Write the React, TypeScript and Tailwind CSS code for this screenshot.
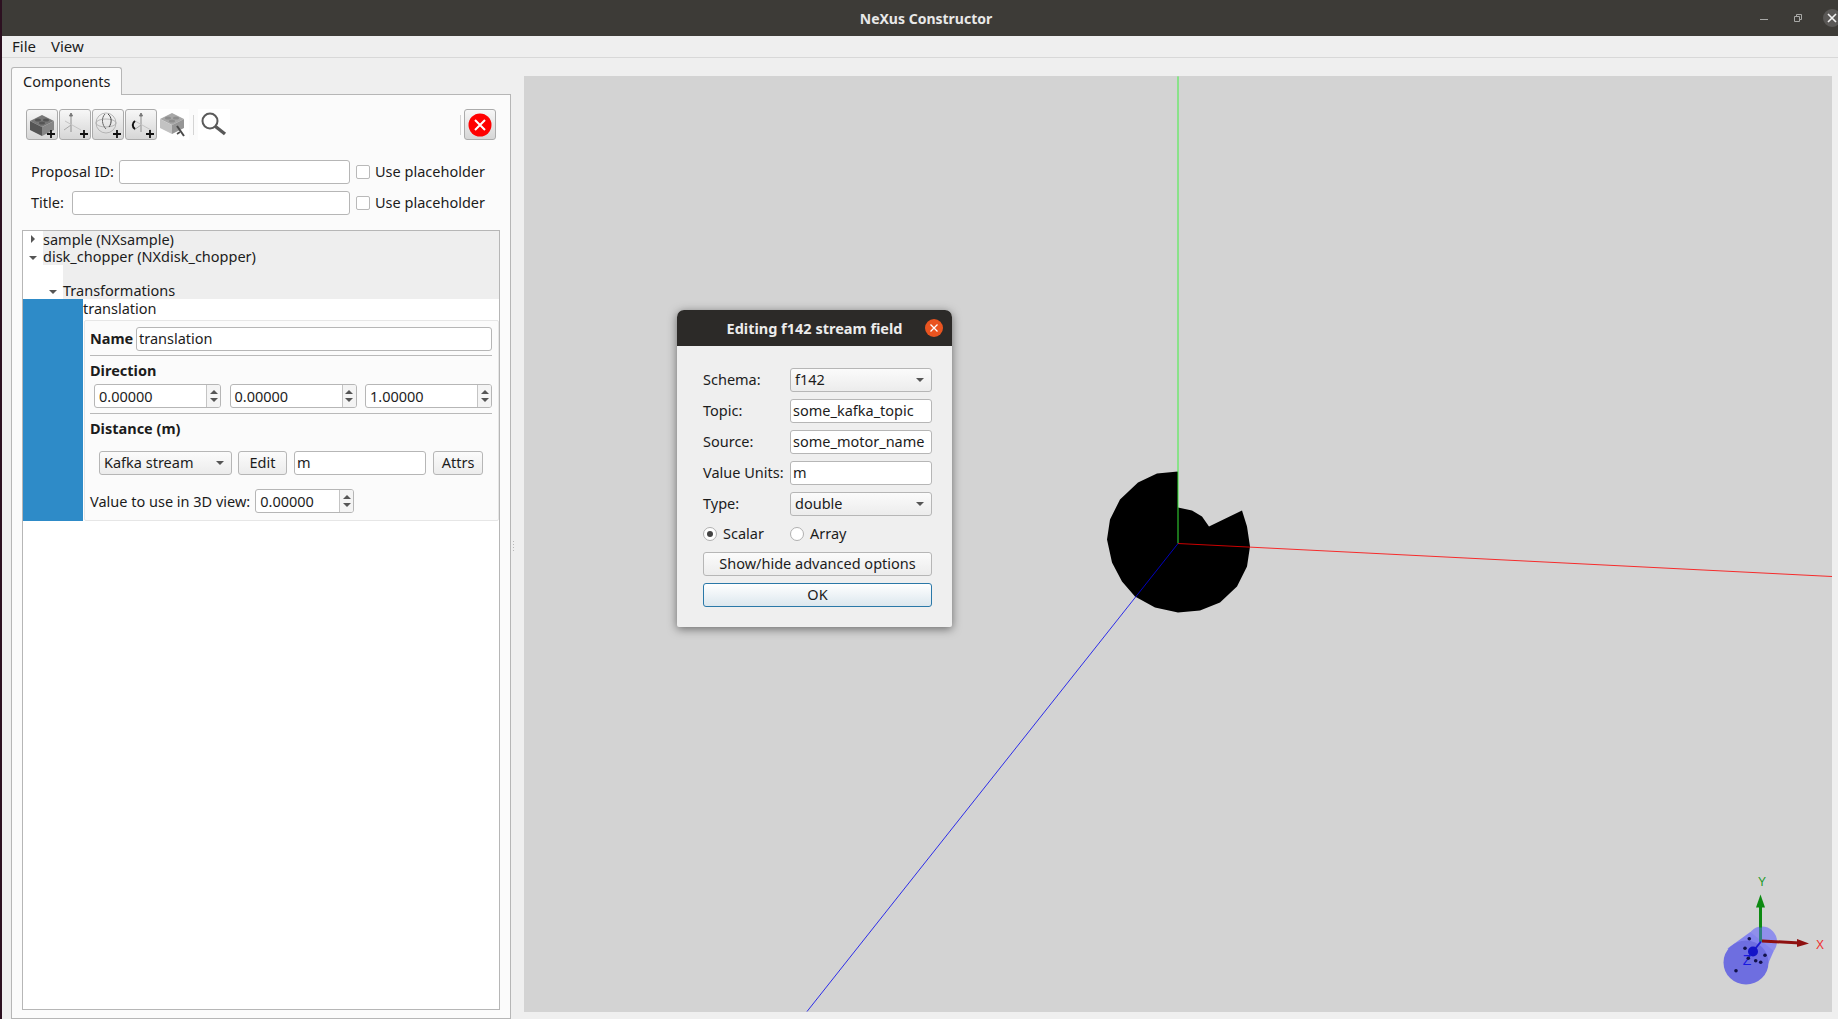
import React from 'react';

const inputCls = 'flex items-center bg-white border border-[#b6b6b6] rounded-[3px] h-[24px] px-[2px] text-[#1c1c1c] overflow-hidden whitespace-nowrap';
const buttonCls = 'flex items-center justify-center border border-[#b6b6b6] rounded-[3px] h-[24px] bg-gradient-to-b from-[#fbfbfb] to-[#ececec] text-[#1c1c1c] whitespace-nowrap';

const Caret = ({ dir = 'down' }: { dir?: 'down' | 'up' | 'right' }) => {
  const pts = dir === 'down' ? '0,0 8,0 4,4' : dir === 'up' ? '0,4 8,4 4,0' : '0,0 4,4 0,8';
  const w = dir === 'right' ? 4 : 8;
  const h = dir === 'right' ? 8 : 4;
  return (
    <svg width={w} height={h} viewBox={`0 0 ${w} ${h}`} className="shrink-0">
      <polygon points={pts} fill="#555" />
    </svg>
  );
};

const Spin = ({ value, w }: { value: string; w: string }) => (
  <div className={`flex bg-white border border-[#b6b6b6] rounded-[3px] h-[24px] overflow-hidden ${w}`}>
    <div className="flex-1 flex items-center pl-[4px] pt-[1px] text-[#1c1c1c]">{value}</div>
    <div className="w-[14px] border-l border-[#c4c4c4] bg-[#f4f4f4] flex flex-col items-center justify-center gap-[4px]">
      <Caret dir="up" />
      <Caret dir="down" />
    </div>
  </div>
);

const Combo = ({ value, className }: { value: string; className: string }) => (
  <div className={`flex items-center justify-between pl-[4px] pr-[7px] border border-[#b6b6b6] rounded-[3px] h-[24px] bg-gradient-to-b from-[#fbfbfb] to-[#ececec] text-[#1c1c1c] ${className}`}>
    <span>{value}</span>
    <Caret />
  </div>
);

const Check = () => <div className="w-[14px] h-[14px] bg-white border border-[#b9b9b9] rounded-[2px] shrink-0" />;

const Brick = ({ wrench }: { wrench?: boolean }) => (
  <>
    <polygon points="3,11 15,5 27,11 15,17" fill={wrench ? '#a8a8a8' : '#777'} />
    <polygon points="3,11 15,17 15,26 3,20" fill={wrench ? '#c2c2c2' : '#555'} />
    <polygon points="15,17 27,11 27,20 15,26" fill={wrench ? '#969696' : '#868686'} />
    <ellipse cx="11" cy="10" rx="3" ry="1.6" fill={wrench ? '#8e8e8e' : '#555'} />
    <ellipse cx="19" cy="10" rx="3" ry="1.6" fill={wrench ? '#8e8e8e' : '#555'} />
    <ellipse cx="15" cy="13" rx="3" ry="1.6" fill={wrench ? '#8e8e8e' : '#555'} />
  </>
);

const Plus = () => <path d="M24 20v8M20 24h8" stroke="#111" strokeWidth="1.8" />;

const Axes = () => (
  <g fill="none">
    <path d="M11 4v18" stroke="#8e8e8e" />
    <path d="M11 15l-7 5" stroke="#a8a8a8" />
    <path d="M5 11l16 9" stroke="#c4c4c4" />
    <path d="M11 3l-1.5 3h3z" fill="#777" stroke="#777" />
  </g>
);

const ToolBtn = ({ children }: { children: React.ReactNode }) => (
  <div className="w-[32px] h-[31px] border border-[#ababab] rounded-[3px] bg-gradient-to-b from-[#f7f7f7] to-[#d6d6d6] flex items-center justify-center">
    <svg width="30" height="29" viewBox="0 0 30 29">{children}</svg>
  </div>
);

const Toolbar = () => (
  <div className="flex items-center h-[31px] pl-[4px] pr-[4px]">
    <div className="flex gap-[1px]">
      <ToolBtn>
        <Brick />
        <Plus />
      </ToolBtn>
      <ToolBtn>
        <Axes />
        <Plus />
      </ToolBtn>
      <ToolBtn>
        <g stroke="#a8a8a8" strokeWidth="0.8" fill="none">
          <circle cx="13" cy="13" r="10" />
          <ellipse cx="13" cy="13" rx="10" ry="4" />
        </g>
        <path d="M15 4c4 3 4 9 1 13" stroke="#444" strokeWidth="1" fill="none" />
        <path d="M12 4c-4 4-3 11 1 15" stroke="#666" strokeWidth="1" fill="none" />
        <Plus />
      </ToolBtn>
      <ToolBtn>
        <g transform="translate(4 0)">
          <Axes />
        </g>
        <path d="M9 11c-3 2-3 6 0 8" stroke="#111" strokeWidth="2" fill="none" />
        <Plus />
      </ToolBtn>
    </div>
    <div className="w-[32px] h-[31px] bg-white flex items-center justify-center">
      <svg width="30" height="29" viewBox="0 0 30 29">
        <g transform="translate(-1 -2)">
          <Brick wrench />
        </g>
        <path d="M19 16l7 10" stroke="#4a4a4a" strokeWidth="2" />
        <path d="M22 22l-3 2" stroke="#4a4a4a" strokeWidth="1.6" />
      </svg>
    </div>
    <div className="w-[1px] h-[20px] bg-[#d4d4d4] mx-[4px]" />
    <div className="w-[32px] h-[31px] bg-white flex items-center justify-center">
      <svg width="30" height="30" viewBox="0 0 30 30">
        <circle cx="11" cy="11" r="7.5" fill="none" stroke="#5a5a5a" strokeWidth="2" />
        <path d="M16.5 16.5l9.5 7.5" stroke="#5a5a5a" strokeWidth="3.4" />
      </svg>
    </div>
    <div className="flex-1" />
    <div className="w-[1px] h-[20px] bg-[#d4d4d4] mr-[3px]" />
    <div className="w-[32px] h-[31px] border border-[#ababab] rounded-[3px] bg-gradient-to-b from-[#f7f7f7] to-[#d6d6d6] flex items-center justify-center">
      <svg width="24" height="24" viewBox="0 0 24 24">
        <circle cx="12" cy="12" r="11.5" fill="#ff0000" />
        <path d="M7 7l10 10M17 7L7 17" stroke="#fff" strokeWidth="2" />
      </svg>
    </div>
  </div>
);

const TreeRow = ({ indent, open, h, children }: { indent: string; open: boolean; h: string; children: string }) => (
  <div className={`flex ${h}`}>
    <div className={`${indent} shrink-0 flex items-end justify-end pb-[5px] bg-white ${open ? 'pr-[6px]' : 'pr-[8px]'}`}>
      <Caret dir={open ? 'down' : 'right'} />
    </div>
    <div className="flex-1 bg-[#eeeeee] flex items-end leading-[17px] text-[#1c1c1c]">{children}</div>
  </div>
);

const ComponentTree = () => (
  <div className="mt-[15px] w-[478px] h-[780px] border border-[#b6b6b6] bg-white text-[#1c1c1c]">
    <TreeRow indent="w-[20px]" open={false} h="h-[17px]">sample (NXsample)</TreeRow>
    <TreeRow indent="w-[20px]" open h="h-[17px]">disk_chopper (NXdisk_chopper)</TreeRow>
    <TreeRow indent="w-[40px]" open h="h-[34px]">Transformations</TreeRow>
    <div className="flex h-[222px]">
      <div className="w-[60px] bg-[#2e8bc8] shrink-0" />
      <div className="flex-1 flex flex-col">
        <div className="h-[21px] flex items-center pb-[2px]">translation</div>
        <div className="flex-1 ml-[1px] bg-[#fbfbfb] border border-[#e6e6e6] rounded-[2px] pl-[5px] pr-[6px] flex flex-col">
          <div className="flex items-center mt-[6px] gap-[3px]">
            <span className="font-bold w-[43px]">Name</span>
            <div className={`${inputCls} flex-1`}>translation</div>
          </div>
          <div className="h-[1px] bg-[#b9b9b9] mt-[4px]" />
          <div className="font-bold h-[28px] pt-[2px] flex items-center">Direction</div>
          <div className="flex pl-[4px] justify-between">
            <Spin value="0.00000" w="w-[127px]" />
            <Spin value="0.00000" w="w-[127px]" />
            <Spin value="1.00000" w="w-[127px]" />
          </div>
          <div className="h-[1px] bg-[#b9b9b9] mt-[5px]" />
          <div className="font-bold h-[30px] flex items-center">Distance (m)</div>
          <div className="flex pl-[9px] gap-[7px] mt-[7px]">
            <Combo value="Kafka stream" className="w-[133px]" />
            <div className={`${buttonCls} w-[49px] -ml-[1px]`}>Edit</div>
            <div className={`${inputCls} w-[132px]`}>m</div>
            <div className={`${buttonCls} w-[50px]`}>Attrs</div>
          </div>
          <div className="flex items-center mt-[14px] gap-[5px]">
            <span className="pt-[1px]">Value to use in 3D view:</span>
            <Spin value="0.00000" w="w-[99px]" />
          </div>
        </div>
      </div>
    </div>
  </div>
);

const LeftPanel = () => (
  <div className="w-[522px] shrink-0 pl-[9px] pr-[13px] pt-[9px] flex flex-col min-h-0">
    <div className="flex">
      <div className="h-[28px] w-[111px] px-[11px] bg-[#fbfbfb] border border-[#b6b6b6] border-b-0 rounded-t-[3px] flex items-center text-[#1c1c1c] -mb-[1px] z-10">
        Components
      </div>
    </div>
    <div className="flex-1 bg-[#fbfbfb] border border-[#b6b6b6] pl-[10px] pt-[14px]">
      <div className="w-[478px]">
        <Toolbar />
      </div>
      <div className="flex items-center mt-[20px] pl-[9px] h-[24px] text-[#1c1c1c]">
        <span className="w-[88px]">Proposal ID:</span>
        <div className={`${inputCls} w-[231px]`} />
        <div className="ml-[6px]"><Check /></div>
        <span className="ml-[5px]">Use placeholder</span>
      </div>
      <div className="flex items-center mt-[7px] pl-[9px] h-[24px] text-[#1c1c1c]">
        <span className="w-[41px]">Title:</span>
        <div className={`${inputCls} w-[278px]`} />
        <div className="ml-[6px]"><Check /></div>
        <span className="ml-[5px]">Use placeholder</span>
      </div>
      <ComponentTree />
    </div>
  </div>
);

const Scene = () => (
  <svg viewBox="524 77 1308 935" className="w-full h-full block">
    <path
      d="M1178 472 L1157 474 L1138 483 L1120 500 L1110 520 L1107 540 L1112 563 L1122 582 L1135 597 L1155 608 L1178 613 L1200 611 L1220 603 L1237 587 L1247 567 L1250 547 L1247 527 L1242 511 L1209 527 L1202 517 L1192 511 L1178 508 Z"
      fill="#000"
    />
    <line x1="1178" y1="77" x2="1178" y2="544" stroke="#37e337" strokeWidth="1" />
    <line x1="1178" y1="77" x2="1178" y2="472" stroke="#8fe88f" strokeWidth="1" />
    <line x1="1178" y1="544" x2="1832" y2="577" stroke="#f00" strokeWidth="0.8" />
    <line x1="1178" y1="544" x2="807" y2="1012" stroke="#0000ee" strokeWidth="0.8" />
    {/* axis gizmo */}
    <text x="1762" y="886" textAnchor="middle" fontFamily="Liberation Sans" fontSize="12" fill="#1e9a28">Y</text>
    <text x="1820" y="949" textAnchor="middle" fontFamily="Liberation Sans" fontSize="12" fill="#f03030">X</text>
    <circle cx="1762" cy="942" r="15" fill="#8f8fec" />
    <polygon points="1727.5,949 1750.3,932.5 1773.7,951.5 1762.5,977" fill="#8484ee" />
    <ellipse cx="1746" cy="963" rx="22.5" ry="22" fill="#6e6ee0" />
    <path d="M1759 942V904h3v38z" fill="#0d8a12" />
    <polygon points="1760.5,895 1756,908 1765,908" fill="#0d8a12" />
    <path d="M1759 928h3v14h-3z" fill="#2f7f80" />
    <path d="M1762 940l38 2v3l-38-2z" fill="#8e1010" />
    <polygon points="1809,944 1797,939.5 1797,947.5" fill="#8e1010" />
    <path d="M1761 942l-8 10" stroke="#1a1ad0" strokeWidth="2" />
    <circle cx="1753" cy="952" r="5" fill="#1414c8" />
    <text x="1747" y="965" textAnchor="middle" fontFamily="Liberation Sans" fontSize="14" fill="#1a1ae0">Z</text>
    {[[1745,948.7],[1749.3,939.3],[1748.3,958.7],[1755.7,961.3],[1760.7,962.7],[1765,955.7],[1736,971.3]].map(([cx, cy]) => (
      <circle key={`${cx}-${cy}`} cx={cx} cy={cy} r="1.8" fill="#12124a" />
    ))}
  </svg>
);

const Dialog = () => {
  const rows: [string, React.ReactNode][] = [
    ['Schema:', <Combo value="f142" className="flex-1" />],
    ['Topic:', <div className={`${inputCls} flex-1`}>some_kafka_topic</div>],
    ['Source:', <div className={`${inputCls} flex-1`}>some_motor_name</div>],
    ['Value Units:', <div className={`${inputCls} flex-1`}>m</div>],
    ['Type:', <Combo value="double" className="flex-1" />],
  ];
  return (
    <div className="absolute left-[675px] top-[310px] w-[275px] h-[317px] bg-[#efefef] rounded-t-[7px] rounded-b-[2px] shadow-[0_2px_10px_rgba(0,0,0,0.5)] overflow-hidden text-[#1c1c1c]">
      <div className="h-[36px] bg-[#2c2a28] flex items-center justify-center relative pt-[1px]">
        <span className="font-bold text-[#ececec]">Editing f142 stream field</span>
        <div className="absolute right-[9px] top-[9px] w-[18px] h-[18px] rounded-full bg-[#e95420] flex items-center justify-center">
          <svg width="10" height="10" viewBox="0 0 10 10">
            <path d="M1.5 1.5l7 7M8.5 1.5l-7 7" stroke="#fff" strokeWidth="1.3" />
          </svg>
        </div>
      </div>
      <div className="pt-[22px] pl-[26px] pr-[20px] flex flex-col gap-[7px]">
        {rows.map(([label, control]) => (
          <div key={label} className="flex items-center">
            <span className="w-[87px]">{label}</span>
            {control}
          </div>
        ))}
        <div className="flex items-center h-[22px]">
          <div className="w-[14px] h-[14px] rounded-full bg-white border border-[#b0b0b0] flex items-center justify-center">
            <div className="w-[6px] h-[6px] rounded-full bg-[#444]" />
          </div>
          <span className="ml-[6px] w-[67px]">Scalar</span>
          <div className="w-[14px] h-[14px] rounded-full bg-white border border-[#b0b0b0]" />
          <span className="ml-[6px]">Array</span>
        </div>
        <div className={buttonCls}>Show/hide advanced options</div>
        <div className="flex items-center justify-center border border-[#2a78a8] rounded-[3px] h-[24px] bg-gradient-to-b from-[#ffffff] to-[#dce7ee]">OK</div>
      </div>
    </div>
  );
};

export default function App() {
  return (
    <div className="relative w-[1838px] h-[1019px] overflow-hidden bg-[#efefef] border-l-2 border-[#2c1020] flex flex-col text-[14.5px] font-['Noto_Sans',sans-serif]">
      {/* window title */}
      <div className="h-[36px] shrink-0 bg-[#3d3b37] flex items-center relative">
        <span className="flex-1 text-center font-bold text-[#e8e8e8] text-[14px] pl-[12px]">NeXus Constructor</span>
        <div className="absolute right-0 top-0 h-[36px] flex items-center">
          <div className="w-[8px] h-[1px] bg-[#a8a8a6] mt-[3px]" />
          <svg width="8" height="8" viewBox="0 0 8 8" className="ml-[26px]">
            <path d="M0.5 2.5h5v5h-5z M2.5 2V0.5h5v5H6" fill="none" stroke="#a8a8a6" />
          </svg>
          <div className="w-[18px] h-[18px] rounded-full bg-[#5a5856] ml-[21px] -mr-[3px] flex items-center justify-center">
            <svg width="10" height="10" viewBox="0 0 10 10">
              <path d="M1 1l8 8M9 1l-8 8" stroke="#f2f2f2" strokeWidth="1.6" />
            </svg>
          </div>
        </div>
      </div>
      {/* menu bar */}
      <div className="h-[22px] shrink-0 border-b border-[#d8d8d8] flex items-center gap-[15px] pl-[10px] text-[#1c1c1c] text-[15px]">
        <span>File</span>
        <span>View</span>
      </div>
      <div className="flex-1 flex min-h-0">
        <LeftPanel />
        <div className="w-[1px] flex flex-col justify-center items-center gap-[2px] -ml-[11px] mr-[10px] mt-[14px]">
          <div className="w-[1px] h-[1px] bg-[#b8b8b8]" />
          <div className="w-[1px] h-[1px] bg-[#b8b8b8]" />
          <div className="w-[1px] h-[1px] bg-[#b8b8b8]" />
          <div className="w-[1px] h-[1px] bg-[#b8b8b8]" />
        </div>
        <div className="flex-1 pt-[18px] pr-[6px] pb-[7px]">
          <div className="w-full h-full bg-[#d3d3d3]">
            <Scene />
          </div>
        </div>
      </div>
      <Dialog />
    </div>
  );
}
